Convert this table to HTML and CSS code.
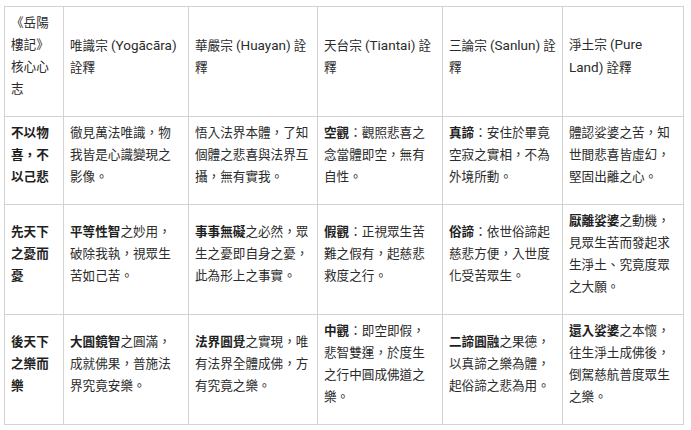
FILE: index.html
```html
<!DOCTYPE html>
<html lang="zh-Hant">
<head>
<meta charset="utf-8">
<title>岳陽樓記 核心心志</title>
<link rel="stylesheet" href="styles.css">
</head>
<body>
<div class="wrap">
<table class="grid">
  <colgroup>
    <col class="c1"><col class="c2"><col class="c3"><col class="c4"><col class="c5"><col class="c6">
  </colgroup>
  <thead>
    <tr>
      <th>《岳陽樓記》核心心志</th>
      <th>唯識宗 <span class="lat">(Yogācāra)</span> 詮釋</th>
      <th>華嚴宗 <span class="lat">(Huayan)</span> 詮釋</th>
      <th>天台宗 <span class="lat">(Tiantai)</span> 詮釋</th>
      <th>三論宗 <span class="lat">(Sanlun)</span> 詮釋</th>
      <th>淨土宗 <span class="lat">(Pure Land)</span> 詮釋</th>
    </tr>
  </thead>
  <tbody>
    <tr>
      <td><b>不以物喜，不以己悲</b></td>
      <td>徹見萬法唯識，物我皆是心識變現之影像。</td>
      <td>悟入法界本體，了知個體之悲喜與法界互攝，無有實我。</td>
      <td><b>空觀</b>：觀照悲喜之念當體即空，無有自性。</td>
      <td><b>真諦</b>：安住於畢竟空寂之實相，不為外境所動。</td>
      <td>體認娑婆之苦，知世間悲喜皆虛幻，堅固出離之心。</td>
    </tr>
    <tr>
      <td><b>先天下之憂而憂</b></td>
      <td><b>平等性智</b>之妙用，破除我執，視眾生苦如己苦。</td>
      <td><b>事事無礙</b>之必然，眾生之憂即自身之憂，此為形上之事實。</td>
      <td><b>假觀</b>：正視眾生苦難之假有，起慈悲救度之行。</td>
      <td><b>俗諦</b>：依世俗諦起慈悲方便，入世度化受苦眾生。</td>
      <td><b>厭離娑婆</b>之動機，見眾生苦而發起求生淨土、究竟度眾之大願。</td>
    </tr>
    <tr>
      <td><b>後天下之樂而樂</b></td>
      <td><b>大圓鏡智</b>之圓滿，成就佛果，普施法界究竟安樂。</td>
      <td><b>法界圓覺</b>之實現，唯有法界全體成佛，方有究竟之樂。</td>
      <td><b>中觀</b>：即空即假，悲智雙運，於度生之行中圓成佛道之樂。</td>
      <td><b>二諦圓融</b>之果德，以真諦之樂為體，起俗諦之悲為用。</td>
      <td><b>還入娑婆</b>之本懷，往生淨土成佛後，倒駕慈航普度眾生之樂。</td>
    </tr>
  </tbody>
</table>
</div>
</body>
</html>
```

FILE: styles.css
```css
html, body {
  margin: 0;
  padding: 0;
  background: #ffffff;
}

body {
  font-family: "Roboto", "Noto Sans CJK TC", sans-serif;
  font-size: 12.6px;
  line-height: 22px;
  color: #2b2b2b;
}

.wrap {
  padding: 6px 4px 0 4px;
}

.grid {
  border-collapse: collapse;
  table-layout: fixed;
  width: 679px;
}

.c1 { width: 59px; }
.c2 { width: 125px; }
.c3 { width: 129px; }
.c4 { width: 125px; }
.c5 { width: 120px; }
.c6 { width: 121px; }

.grid th,
.grid td {
  border: 1px solid #d3d3d3;
  padding: 5px 6px 16px 6px;
  vertical-align: middle;
  text-align: left;
  font-weight: 400;
  line-break: strict;
}

.grid .lat {
  font-size: 13.5px;
}

.grid b {
  font-weight: 700;
  color: #1f1f1f;
}
```
